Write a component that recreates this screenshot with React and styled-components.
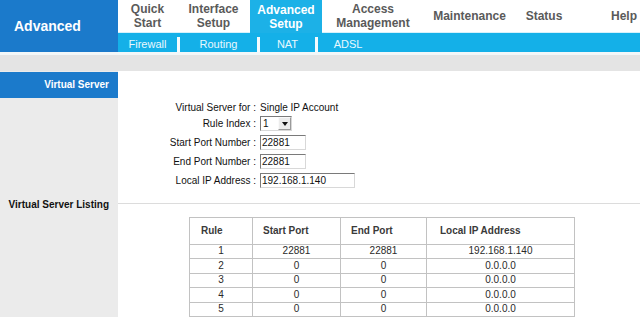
import React from "react";
import styled, { createGlobalStyle } from "styled-components";

const Global = createGlobalStyle`
  html, body { margin: 0; padding: 0; overflow: hidden; background: #fff; }
  body { font-family: "Liberation Sans", Arial, sans-serif; }
`;

const Page = styled.div`
  width: 640px;
  height: 317px;
  display: flex;
  flex-direction: column;
  overflow: hidden;
`;

const Header = styled.header`
  display: flex;
  height: 55px;
`;

const Brand = styled.div`
  width: 118px;
  flex: none;
  background: #1b7acb;
  color: #fff;
  font-weight: bold;
  font-size: 14px;
  display: flex;
  align-items: center;
  padding-left: 14px;
  box-sizing: border-box;
`;

const NavColumn = styled.div`
  flex: 1;
  display: flex;
  flex-direction: column;
`;

const TabRow = styled.nav`
  height: 33px;
  display: flex;
  background: #fff;
  box-sizing: border-box;
  border-bottom: 1px solid #d6f1fb;
`;

const Tab = styled.div`
  width: ${(p) => p.$w}px;
  flex: ${(p) => (p.$grow ? 1 : "none")};
  display: flex;
  align-items: center;
  justify-content: ${(p) => (p.$end ? "flex-end" : "center")};
  padding-right: ${(p) => (p.$end ? 3 : 0)}px;
  text-align: center;
  font-size: 12px;
  font-weight: bold;
  line-height: 14px;
  color: ${(p) => (p.$active ? "#fff" : "#5a5a5a")};
  background: ${(p) => (p.$active ? "#1cb1e7" : "transparent")};
  margin-bottom: ${(p) => (p.$active ? -1 : 0)}px;
`;

const SubNav = styled.div`
  flex: 1;
  display: flex;
  background: #14b0e8;
  align-items: stretch;
`;

const SubItem = styled.div`
  width: ${(p) => p.$w}px;
  flex: none;
  display: flex;
  align-items: center;
  justify-content: center;
  padding-top: 3px;
  font-size: 11px;
  color: #e9f8fe;
`;

const SubSep = styled.div`
  width: 3px;
  flex: none;
  margin-top: 4px;
  background: #f4fbfe;
`;

const Stripe = styled.div`
  height: 3px;
  background: #f3f7f8;
`;

const Band = styled.div`
  height: 16px;
  background: #e4e4e4;
`;

const Body = styled.div`
  flex: 1;
  display: flex;
  flex-direction: column;
`;

const Section = styled.section`
  display: grid;
  grid-template-columns: 118px 1fr;
  flex: ${(p) => (p.$fill ? 1 : "none")};
  height: ${(p) => (p.$h ? `${p.$h}px` : "auto")};
`;

const SideCell = styled.div`
  background: #ebebeb;
`;

const SideTitle = styled.div`
  margin-top: 1px;
  height: 26px;
  background: #1b7acb;
  color: #fff;
  font-size: 10px;
  font-weight: bold;
  display: flex;
  align-items: center;
  justify-content: flex-end;
  padding-right: 9px;
`;

const SideLabel = styled.div`
  padding-top: 1px;
  font-size: 10px;
  font-weight: bold;
  color: #111;
  line-height: 14px;
  text-align: right;
  padding-right: 9px;
`;

const MainCell = styled.div`
  background: #fff;
  padding-top: ${(p) => p.$pt || 0}px;
`;

const Form = styled.div`
  display: grid;
  grid-template-columns: 138px auto;
  grid-template-rows: 14px 18px 19px 19px 19px;
  column-gap: 4px;
  align-items: center;
  font-size: 10px;
  color: #111;
`;

const Label = styled.div`
  text-align: right;
  white-space: nowrap;
`;

const Value = styled.div`
  display: flex;
  align-items: center;
`;

const Input = styled.div`
  width: ${(p) => p.$w}px;
  height: 15px;
  box-sizing: border-box;
  border-style: solid;
  border-width: 1px;
  border-color: #7a7a7a #d8d8d8 #d8d8d8 #7a7a7a;
  background: #fff;
  font-size: 10px;
  line-height: 13px;
  padding-left: 1px;
`;

const SelectBox = styled.div`
  width: 32px;
  height: 15px;
  box-sizing: border-box;
  border-style: solid;
  border-width: 1px;
  border-color: #7a7a7a #d8d8d8 #d8d8d8 #7a7a7a;
  display: flex;
  align-items: stretch;
  background: #fff;
`;

const SelectText = styled.span`
  flex: 1;
  font-size: 10px;
  line-height: 13px;
  padding-left: 2px;
`;

const SelectButton = styled.span`
  width: 13px;
  box-sizing: border-box;
  background: #ececec;
  border: 1px solid;
  border-color: #fafafa #9a9a9a #9a9a9a #fafafa;
  display: flex;
  align-items: center;
  justify-content: center;
  &::after {
    content: "";
    border-left: 3px solid transparent;
    border-right: 3px solid transparent;
    border-top: 4px solid #111;
  }
`;

const Divider = styled.div`
  margin-top: 6px;
  height: 1px;
  background: #dcdcdc;
`;

const Table = styled.table`
  margin-top: 13px;
  margin-left: 71px;
  border-collapse: collapse;
  width: 386px;
  table-layout: fixed;
  font-size: 10px;
`;

const Th = styled.th`
  width: ${(p) => p.$w - p.$pl - 1}px;
  height: 26px;
  padding: 0 0 0 ${(p) => p.$pl}px;
  text-align: left;
  font-weight: bold;
  color: #3a3a3a;
  border: 1px solid #c2c2c2;
`;

const Td = styled.td`
  height: 13.5px;
  padding: 0;
  line-height: 12px;
  text-align: center;
  color: #2a2a2a;
  border: 1px solid #c2c2c2;
`;

const tabs = [
  { lines: ["Quick", "Start"], w: 59 },
  { lines: ["Interface", "Setup"], w: 73 },
  { lines: ["Advanced", "Setup"], w: 72, active: true },
  { lines: ["Access", "Management"], w: 102 },
  { lines: ["Maintenance"], w: 91 },
  { lines: ["Status"], w: 58 },
  { lines: ["Help"], grow: true, end: true },
];

const subItems = [
  { label: "Firewall", w: 59 },
  { label: "Routing", w: 77 },
  { label: "NAT", w: 55 },
  { label: "ADSL", w: 60 },
];

const columns = [
  { label: "Rule", w: 63, pl: 11 },
  { label: "Start Port", w: 88, pl: 10 },
  { label: "End Port", w: 86, pl: 10 },
  { label: "Local IP Address", w: 148, pl: 13 },
];

const rows = [
  ["1", "22881", "22881", "192.168.1.140"],
  ["2", "0", "0", "0.0.0.0"],
  ["3", "0", "0", "0.0.0.0"],
  ["4", "0", "0", "0.0.0.0"],
  ["5", "0", "0", "0.0.0.0"],
];

export default function App() {
  return (
    <>
      <Global />
      <Page>
        <Header>
          <Brand>Advanced</Brand>
          <NavColumn>
            <TabRow>
              {tabs.map((t) => (
                <Tab key={t.lines.join()} $w={t.w} $active={t.active} $grow={t.grow} $end={t.end}>
                  <span>
                    {t.lines.map((l, i) => (
                      <React.Fragment key={l}>
                        {i > 0 && <br />}
                        {l}
                      </React.Fragment>
                    ))}
                  </span>
                </Tab>
              ))}
            </TabRow>
            <SubNav>
              {subItems.map((s, i) => (
                <React.Fragment key={s.label}>
                  {i > 0 && <SubSep />}
                  <SubItem $w={s.w}>{s.label}</SubItem>
                </React.Fragment>
              ))}
            </SubNav>
          </NavColumn>
        </Header>
        <Stripe />
        <Band />
        <Body>
          <Section $h={126}>
            <SideCell>
              <SideTitle>Virtual Server</SideTitle>
            </SideCell>
            <MainCell $pt={30}>
              <Form>
                <Label>Virtual Server for :</Label>
                <Value>Single IP Account</Value>
                <Label>Rule Index :</Label>
                <Value>
                  <SelectBox>
                    <SelectText>1</SelectText>
                    <SelectButton />
                  </SelectBox>
                </Value>
                <Label>Start Port Number :</Label>
                <Value>
                  <Input $w={46}>22881</Input>
                </Value>
                <Label>End Port Number :</Label>
                <Value>
                  <Input $w={46}>22881</Input>
                </Value>
                <Label>Local IP Address :</Label>
                <Value>
                  <Input $w={95}>192.168.1.140</Input>
                </Value>
              </Form>
            </MainCell>
          </Section>
          <Section $fill>
            <SideCell>
              <SideLabel>Virtual Server Listing</SideLabel>
            </SideCell>
            <MainCell>
              <Divider />
              <Table>
                <thead>
                  <tr>
                    {columns.map((c) => (
                      <Th key={c.label} $w={c.w} $pl={c.pl}>
                        {c.label}
                      </Th>
                    ))}
                  </tr>
                </thead>
                <tbody>
                  {rows.map((r) => (
                    <tr key={r[0]}>
                      {r.map((v, i) => (
                        <Td key={i}>{v}</Td>
                      ))}
                    </tr>
                  ))}
                </tbody>
              </Table>
            </MainCell>
          </Section>
        </Body>
      </Page>
    </>
  );
}
